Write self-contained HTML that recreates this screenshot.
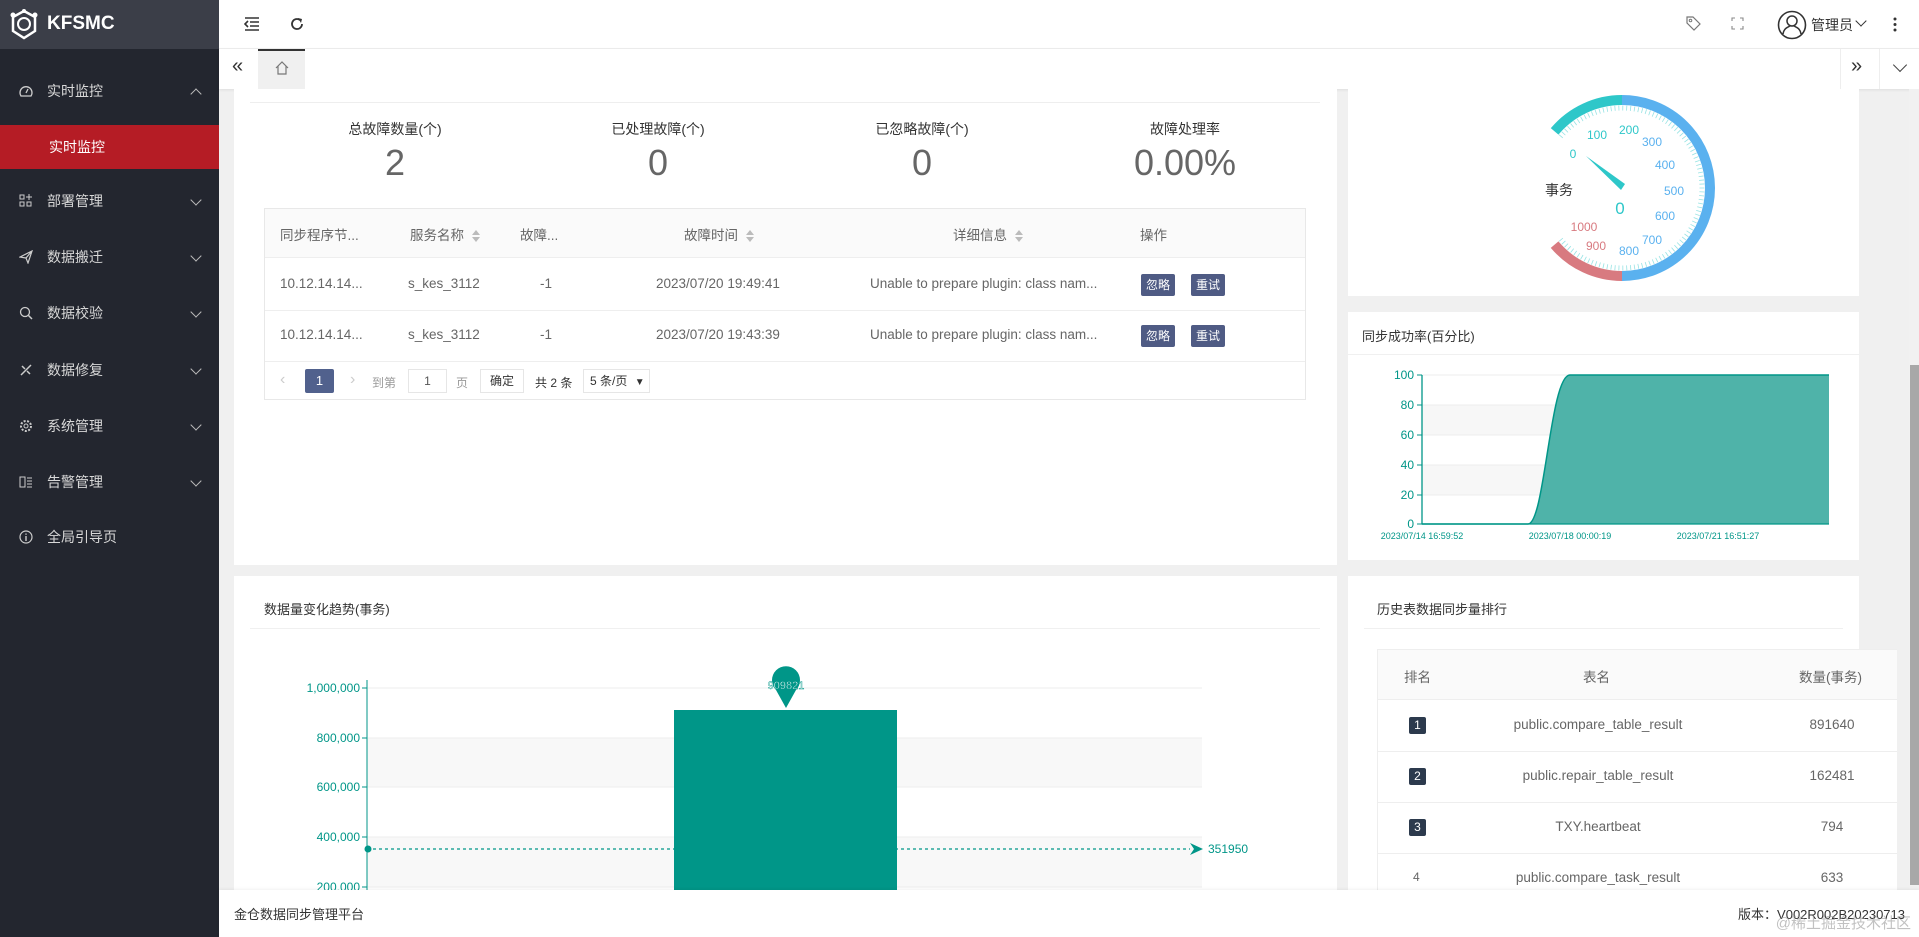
<!DOCTYPE html>
<html><head><meta charset="utf-8"><style>
*{margin:0;padding:0;box-sizing:border-box}
body{width:1919px;height:937px;overflow:hidden;position:relative;background:#f0f0f0;font-family:"Liberation Sans","Noto Sans CJK SC",sans-serif;color:#555;font-size:14px}
.abs{position:absolute}
#side{left:0;top:0;width:219px;height:937px;background:#23262f}
#logo{left:0;top:0;width:219px;height:49px;background:#3b3e48;color:#fff;font-weight:bold;font-size:19px}
.mi{position:absolute;left:0;width:219px;height:40px;color:#d8d8d8;font-size:14px;line-height:40px}
.mi .ic{position:absolute;left:19px;top:13px;width:14px;height:14px}
.mi .t{position:absolute;left:47px}
.mi .ar{position:absolute;left:192px;top:15px;width:8px;height:8px;border-right:1.5px solid #bbb;border-bottom:1.5px solid #bbb;transform:rotate(45deg)}
.mi .ar.up{transform:rotate(-135deg);top:19px}
#top{left:219px;top:0;width:1700px;height:49px;background:#fff;border-bottom:1px solid #eee}
#tabs{left:219px;top:49px;width:1700px;height:40px;background:#fff;box-shadow:0 1px 3px rgba(0,0,0,.08)}
.card{position:absolute;background:#fff}
.lbl{position:absolute;font-size:14px;color:#333;transform:translateX(-50%);white-space:nowrap}
.big{position:absolute;font-size:36px;color:#666;transform:translateX(-50%)}
.th{position:absolute;font-size:13.5px;color:#666;white-space:nowrap}
.td{position:absolute;font-size:13.5px;color:#666;white-space:nowrap}
.btn{position:absolute;height:22px;width:34px;background:#4f5b84;color:#fff;font-size:12px;line-height:22px;text-align:center;border-radius:2px}
.sort{display:inline-block;margin-left:8px;vertical-align:middle}
.sort:before{content:"";display:block;border:4px solid transparent;border-bottom:5px solid #bbb;border-top:0;margin-bottom:2px}
.sort:after{content:"";display:block;border:4px solid transparent;border-top:5px solid #bbb;border-bottom:0}
.rk{position:absolute;width:17px;height:17px;background:#2c3a4d;color:#fff;font-size:12px;line-height:17px;text-align:center;border-radius:2px}
</style></head><body>

<div id="side" class="abs">
 <div id="logo" class="abs">
  <svg class="abs" style="left:9px;top:9px" width="30" height="32" viewBox="0 0 30 32"><path d="M15 2 L26 8 L26 22 L15 29 L4 22 L4 8 Z" fill="none" stroke="#fff" stroke-width="2.5"/><circle cx="15" cy="15" r="6" fill="none" stroke="#fff" stroke-width="2"/><circle cx="4" cy="6" r="2.5" fill="#fff"/><circle cx="26" cy="6" r="2.5" fill="#fff"/><circle cx="15" cy="2" r="2" fill="#fff"/></svg>
  <span class="abs" style="left:47px;top:13px">KFSMC</span>
 </div>
 <div class="mi" style="top:71px"><svg class="ic" viewBox="0 0 14 14"><path d="M2 12 A6 6 0 1 1 12 12 Z" fill="none" stroke="#ccc" stroke-width="1.3"/><path d="M7 9 L9 5" stroke="#ccc" stroke-width="1.3"/></svg><span class="t">实时监控</span><span class="ar up"></span></div>
 <div class="abs" style="left:0;top:125px;width:219px;height:44px;background:#b51c25;color:#fff;font-size:14px;line-height:44px;padding-left:49px">实时监控</div>
 <div class="mi" style="top:181px"><svg class="ic" viewBox="0 0 14 14"><rect x="1" y="1" width="4" height="4" fill="none" stroke="#ccc"/><rect x="1" y="8" width="4" height="4" fill="none" stroke="#ccc"/><rect x="8" y="8" width="4" height="4" fill="none" stroke="#ccc"/><path d="M10 0 L10 6 M7 3 L13 3" stroke="#ccc"/></svg><span class="t">部署管理</span><span class="ar"></span></div>
 <div class="mi" style="top:237px"><svg class="ic" viewBox="0 0 14 14"><path d="M1 7 L13 1 L9 13 L7 8 Z M7 8 L13 1" fill="none" stroke="#ccc" stroke-width="1.2"/></svg><span class="t">数据搬迁</span><span class="ar"></span></div>
 <div class="mi" style="top:293px"><svg class="ic" viewBox="0 0 14 14"><circle cx="6" cy="6" r="4.5" fill="none" stroke="#ccc" stroke-width="1.3"/><path d="M9.5 9.5 L13 13" stroke="#ccc" stroke-width="1.5"/></svg><span class="t">数据校验</span><span class="ar"></span></div>
 <div class="mi" style="top:350px"><svg class="ic" viewBox="0 0 14 14"><path d="M2 12 L12 2 M3 3 L6 6 M8 8 L11 11" stroke="#ccc" stroke-width="1.5"/></svg><span class="t">数据修复</span><span class="ar"></span></div>
 <div class="mi" style="top:406px"><svg class="ic" viewBox="0 0 14 14"><circle cx="7" cy="7" r="5" fill="none" stroke="#ccc" stroke-width="2" stroke-dasharray="2 1.5"/><circle cx="7" cy="7" r="2" fill="none" stroke="#ccc"/></svg><span class="t">系统管理</span><span class="ar"></span></div>
 <div class="mi" style="top:462px"><svg class="ic" viewBox="0 0 14 14"><rect x="1" y="2" width="5" height="10" fill="none" stroke="#ccc"/><path d="M8 3 H13 M8 6 H13 M8 9 H13 M8 12 H13" stroke="#ccc"/></svg><span class="t">告警管理</span><span class="ar"></span></div>
 <div class="mi" style="top:517px"><svg class="ic" viewBox="0 0 14 14"><circle cx="7" cy="7" r="6" fill="none" stroke="#ccc" stroke-width="1.2"/><path d="M7 6 V11 M7 3.5 V4.8" stroke="#ccc" stroke-width="1.4"/></svg><span class="t">全局引导页</span></div>
</div>

<div id="top" class="abs">
 <svg class="abs" style="left:25px;top:17px" width="16" height="14" viewBox="0 0 16 14"><path d="M1 1 H15 M6 5 H15 M6 9 H15 M1 13 H15 M4 4 L1 7 L4 10" fill="none" stroke="#333" stroke-width="1.6"/></svg>
 <svg class="abs" style="left:70px;top:16px" width="16" height="16" viewBox="0 0 16 16"><path d="M13 8 A5 5 0 1 1 11 4" fill="none" stroke="#333" stroke-width="1.8"/><path d="M9 2 L13 3 L12 7" fill="#333"/></svg>
 <svg class="abs" style="left:1466px;top:15px" width="16" height="16" viewBox="0 0 16 16"><path d="M2 2 H8 L15 9 L9 15 L2 8 Z" fill="none" stroke="#777" stroke-width="1.2"/><circle cx="5.5" cy="5.5" r="1.3" fill="none" stroke="#777"/></svg>
 <svg class="abs" style="left:1512px;top:17px" width="13" height="13" viewBox="0 0 13 13"><path d="M1 4 V1 H4 M9 1 H12 V4 M12 9 V12 H9 M4 12 H1 V9" fill="none" stroke="#888" stroke-width="1.1"/></svg>
 <svg class="abs" style="left:1558px;top:10px" width="30" height="30" viewBox="0 0 30 30"><circle cx="15" cy="15" r="13.5" fill="none" stroke="#333" stroke-width="1.6"/><circle cx="15" cy="11" r="5" fill="none" stroke="#333" stroke-width="1.5"/><path d="M6 24 C7 18 11 17 13 16 M24 24 C23 18 19 17 17 16" fill="none" stroke="#333" stroke-width="1.5"/></svg>
 <span class="abs" style="left:1592px;top:15px;font-size:14px;color:#333">管理员</span>
 <span class="abs" style="left:1638px;top:17px;width:8px;height:8px;border-right:1.3px solid #333;border-bottom:1.3px solid #333;transform:rotate(45deg)"></span>
 <svg class="abs" style="left:1674px;top:17px" width="4" height="15"><circle cx="2" cy="2" r="1.5" fill="#333"/><circle cx="2" cy="7.5" r="1.5" fill="#333"/><circle cx="2" cy="13" r="1.5" fill="#333"/></svg>
</div>

<div id="tabs" class="abs">
 <span class="abs" style="left:13px;top:6px;font-size:20px;color:#333">«</span>
 <div class="abs" style="left:39px;top:0;width:47px;height:40px;background:#f0f0f0;border-top:2px solid #333"></div>
 <svg class="abs" style="left:55px;top:11px" width="16" height="16" viewBox="0 0 16 16"><path d="M2 8 L8 2 L14 8 M4 6 V14 H12 V6" fill="none" stroke="#777" stroke-width="1.2"/></svg>
 <div class="abs" style="left:1621px;top:0;width:1px;height:40px;background:#eee"></div>
 <span class="abs" style="left:1632px;top:6px;font-size:20px;color:#333">»</span>
 <div class="abs" style="left:1660px;top:0;width:1px;height:40px;background:#eee"></div>
 <span class="abs" style="left:1676px;top:11px;width:10px;height:10px;border-right:1.3px solid #444;border-bottom:1.3px solid #444;transform:rotate(45deg)"></span>
</div>

<!-- card 1 -->
<div class="card" style="left:234px;top:89px;width:1103px;height:476px">
 <div class="abs" style="left:16px;top:13px;width:1070px;height:1px;background:#eee"></div>
</div>
<span class="lbl" style="left:395px;top:119px">总故障数量(个)</span>
<span class="lbl" style="left:658px;top:119px">已处理故障(个)</span>
<span class="lbl" style="left:922px;top:119px">已忽略故障(个)</span>
<span class="lbl" style="left:1185px;top:119px">故障处理率</span>
<span class="big" style="left:395px;top:142px">2</span>
<span class="big" style="left:658px;top:142px">0</span>
<span class="big" style="left:922px;top:142px">0</span>
<span class="big" style="left:1185px;top:142px">0.00%</span>

<div class="abs" style="left:264px;top:208px;width:1042px;height:192px;border:1px solid #e8e8e8;background:#fff"></div>
<div class="abs" style="left:265px;top:209px;width:1040px;height:49px;background:#fafafa;border-bottom:1px solid #eee"></div>
<div class="abs" style="left:265px;top:310px;width:1040px;height:1px;background:#eee"></div>
<div class="abs" style="left:265px;top:361px;width:1040px;height:1px;background:#eee"></div>
<span class="th" style="left:280px;top:224px">同步程序节...</span>
<span class="th" style="left:410px;top:224px">服务名称<span class="sort"></span></span>
<span class="th" style="left:520px;top:224px">故障...</span>
<span class="th" style="left:684px;top:224px">故障时间<span class="sort"></span></span>
<span class="th" style="left:953px;top:224px">详细信息<span class="sort"></span></span>
<span class="th" style="left:1140px;top:224px">操作</span>

<span class="td" style="left:280px;top:276px">10.12.14.14...</span>
<span class="td" style="left:408px;top:276px">s_kes_3112</span>
<span class="td" style="left:540px;top:276px">-1</span>
<span class="td" style="left:656px;top:276px">2023/07/20 19:49:41</span>
<span class="td" style="left:870px;top:276px">Unable to prepare plugin: class nam...</span>
<div class="btn" style="left:1141px;top:274px">忽略</div><div class="btn" style="left:1191px;top:274px">重试</div>
<span class="td" style="left:280px;top:327px">10.12.14.14...</span>
<span class="td" style="left:408px;top:327px">s_kes_3112</span>
<span class="td" style="left:540px;top:327px">-1</span>
<span class="td" style="left:656px;top:327px">2023/07/20 19:43:39</span>
<span class="td" style="left:870px;top:327px">Unable to prepare plugin: class nam...</span>
<div class="btn" style="left:1141px;top:325px">忽略</div><div class="btn" style="left:1191px;top:325px">重试</div>

<span class="td" style="left:280px;top:371px;color:#ccc;font-size:16px">‹</span>
<div class="abs" style="left:305px;top:369px;width:29px;height:24px;background:#51618d;color:#fff;font-size:13px;text-align:center;line-height:24px;border-radius:2px">1</div>
<span class="td" style="left:350px;top:371px;color:#ccc;font-size:16px">›</span>
<span class="td" style="left:372px;top:374px;color:#999;font-size:12px">到第</span>
<div class="abs" style="left:408px;top:369px;width:39px;height:24px;border:1px solid #e6e6e6;font-size:12px;text-align:center;line-height:22px;color:#555">1</div>
<span class="td" style="left:456px;top:374px;color:#999;font-size:12px">页</span>
<div class="abs" style="left:480px;top:369px;width:44px;height:24px;border:1px solid #e6e6e6;font-size:12px;text-align:center;line-height:22px;color:#333">确定</div>
<span class="td" style="left:535px;top:374px;color:#333;font-size:12px">共 2 条</span>
<div class="abs" style="left:583px;top:369px;width:67px;height:24px;border:1px solid #e6e6e6;font-size:12px;line-height:22px;color:#333;padding-left:6px">5 条/页 <span style="font-size:10px;margin-left:4px">▼</span></div>

<!-- gauge card -->
<div class="card" style="left:1348px;top:89px;width:511px;height:207px"></div>
<svg class="abs" style="left:1348px;top:89px" width="511" height="207" viewBox="1348 89 511 207">
 <g fill="none" stroke-width="10">
  <path d="M1554.6 131.4 A88 88 0 0 1 1622 100" stroke="#2ec7c9"/>
  <path d="M1622 100 A88 88 0 0 1 1622 276" stroke="#5ab1ef"/>
  <path d="M1622 276 A88 88 0 0 1 1554.6 244.6" stroke="#d87a80"/>
 </g>
 <path d="M1560.7 136.6 A80 80 0 1 1 1560.7 239.4" fill="none" stroke="#2ec7c9" stroke-width="5" stroke-dasharray="0.8 3.1" opacity=".5"/>
 <g font-size="12" font-family="Liberation Sans" text-anchor="middle">
  <text x="1573" y="158" fill="#2ec7c9">0</text>
  <text x="1597" y="139" fill="#2ec7c9">100</text>
  <text x="1629" y="134" fill="#2ec7c9">200</text>
  <text x="1652" y="146" fill="#5ab1ef">300</text>
  <text x="1665" y="169" fill="#5ab1ef">400</text>
  <text x="1674" y="195" fill="#5ab1ef">500</text>
  <text x="1665" y="220" fill="#5ab1ef">600</text>
  <text x="1652" y="244" fill="#5ab1ef">700</text>
  <text x="1629" y="255" fill="#5ab1ef">800</text>
  <text x="1596" y="250" fill="#d87a80">900</text>
  <text x="1584" y="231" fill="#d87a80">1000</text>
 </g>
 <text x="1559" y="195" font-size="14" fill="#333" text-anchor="middle" font-family="Noto Sans CJK SC">事务</text>
 <text x="1620" y="214" font-size="17" fill="#2ec7c9" text-anchor="middle" font-family="Liberation Sans">0</text>
 <path d="M1586 156 L1625 184 L1621 190 Z" fill="#2ec7c9"/>
</svg>

<!-- success chart card -->
<div class="card" style="left:1348px;top:312px;width:511px;height:248px">
 <span class="abs" style="left:14px;top:14px;font-size:13px;color:#333">同步成功率(百分比)</span>
 <div class="abs" style="left:0;top:42px;width:511px;height:1px;background:#f0f0f0"></div>
</div>
<svg class="abs" style="left:1348px;top:312px" width="511" height="248" viewBox="1348 312 511 248">
 <rect x="1422" y="405" width="407" height="30" fill="#f7f7f7"/>
 <rect x="1422" y="465" width="407" height="30" fill="#f7f7f7"/>
 <g stroke="#eee"><path d="M1422 375 H1829 M1422 405 H1829 M1422 435 H1829 M1422 465 H1829 M1422 495 H1829"/></g>
 <path d="M1528 524 C1545 524 1550 375 1570 375 L1829 375 L1829 524 Z" fill="#4fb3a9"/>
 <path d="M1422 524 H1528 C1545 524 1550 375 1570 375 H1829" fill="none" stroke="#009688" stroke-width="1.5"/>
 <path d="M1422 375 V524 H1829" fill="none" stroke="#009688" stroke-width="1.3"/>
 <g stroke="#009688"><path d="M1417 375 H1422 M1417 405 H1422 M1417 435 H1422 M1417 465 H1422 M1417 495 H1422 M1417 524 H1422"/></g>
 <g font-size="12" fill="#009688" text-anchor="end" font-family="Liberation Sans">
  <text x="1414" y="379">100</text><text x="1414" y="409">80</text><text x="1414" y="439">60</text><text x="1414" y="469">40</text><text x="1414" y="499">20</text><text x="1414" y="528">0</text>
 </g>
 <g font-size="9" fill="#009688" text-anchor="middle" font-family="Liberation Sans">
  <text x="1422" y="539">2023/07/14 16:59:52</text><text x="1570" y="539">2023/07/18 00:00:19</text><text x="1718" y="539">2023/07/21 16:51:27</text>
 </g>
</svg>

<!-- bottom-left card -->
<div class="card" style="left:234px;top:576px;width:1103px;height:361px">
 <span class="abs" style="left:30px;top:23px;font-size:13px;color:#333">数据量变化趋势(事务)</span>
 <div class="abs" style="left:16px;top:52px;width:1070px;height:1px;background:#f0f0f0"></div>
</div>
<svg class="abs" style="left:234px;top:576px" width="1103" height="361" viewBox="234 576 1103 361">
 <rect x="367" y="738" width="835" height="49" fill="#f8f8f8"/>
 <rect x="367" y="837" width="835" height="50" fill="#f8f8f8"/>
 <g stroke="#eee"><path d="M367 688 H1202 M367 738 H1202 M367 787 H1202 M367 837 H1202 M367 887 H1202"/></g>
 <path d="M367 680 V937" stroke="#009688" stroke-width="1"/>
 <g stroke="#009688"><path d="M362 688 H367 M362 738 H367 M362 787 H367 M362 837 H367 M362 887 H367"/></g>
 <g font-size="12" fill="#009688" text-anchor="end" font-family="Liberation Sans">
  <text x="360" y="692">1,000,000</text><text x="360" y="742">800,000</text><text x="360" y="791">600,000</text><text x="360" y="841">400,000</text><text x="360" y="891">200,000</text>
 </g>
 <rect x="674" y="710" width="223" height="227" fill="#009688"/>
 <path d="M786 708 L776 690 A14 14 0 1 1 796 690 Z" fill="#009688"/>
 <text x="786" y="689" font-size="11" fill="#fff" stroke="#009688" stroke-width="0.4" text-anchor="middle" font-family="Liberation Sans">909821</text>
 <path d="M367 849 H1190" stroke="#009688" stroke-dasharray="3 3" stroke-width="1.3"/>
 <circle cx="368" cy="849" r="3.5" fill="#009688"/>
 <path d="M1190 843 L1203 849 L1190 855 L1194 849 Z" fill="#009688"/>
 <text x="1208" y="853" font-size="12" fill="#009688" font-family="Liberation Sans">351950</text>
</svg>

<!-- bottom-right card -->
<div class="card" style="left:1348px;top:576px;width:511px;height:361px">
 <span class="abs" style="left:29px;top:23px;font-size:13px;color:#333">历史表数据同步量排行</span>
 <div class="abs" style="left:16px;top:52px;width:479px;height:1px;background:#f0f0f0"></div>
</div>
<div class="abs" style="left:1377px;top:649px;width:520px;height:288px;border-left:1px solid #eee;background:#fff"></div>
<div class="abs" style="left:1378px;top:649px;width:519px;height:51px;background:#fafafa;border-bottom:1px solid #eee;border-top:1px solid #eee"></div>
<div class="abs" style="left:1378px;top:751px;width:519px;height:1px;background:#eee"></div>
<div class="abs" style="left:1378px;top:802px;width:519px;height:1px;background:#eee"></div>
<div class="abs" style="left:1378px;top:853px;width:519px;height:1px;background:#eee"></div>
<span class="td" style="left:1404px;top:666px">排名</span>
<span class="td" style="left:1583px;top:666px">表名</span>
<span class="td" style="left:1799px;top:666px">数量(事务)</span>
<div class="rk" style="left:1409px;top:717px">1</div>
<div class="rk" style="left:1409px;top:768px">2</div>
<div class="rk" style="left:1409px;top:819px">3</div>
<span class="td" style="left:1413px;top:870px;font-size:12px">4</span>
<span class="td" style="left:1598px;top:717px;transform:translateX(-50%)">public.compare_table_result</span>
<span class="td" style="left:1598px;top:768px;transform:translateX(-50%)">public.repair_table_result</span>
<span class="td" style="left:1598px;top:819px;transform:translateX(-50%)">TXY.heartbeat</span>
<span class="td" style="left:1598px;top:870px;transform:translateX(-50%)">public.compare_task_result</span>
<span class="td" style="left:1832px;top:717px;transform:translateX(-50%)">891640</span>
<span class="td" style="left:1832px;top:768px;transform:translateX(-50%)">162481</span>
<span class="td" style="left:1832px;top:819px;transform:translateX(-50%)">794</span>
<span class="td" style="left:1832px;top:870px;transform:translateX(-50%)">633</span>

<!-- scrollbar -->
<div class="abs" style="left:1909px;top:89px;width:10px;height:801px;background:#f1f1f1"></div>
<div class="abs" style="left:1910px;top:365px;width:9px;height:520px;background:#a8a8a8"></div>

<!-- footer -->
<div class="abs" style="left:219px;top:890px;width:1700px;height:47px;background:#fff;box-shadow:0 -1px 3px rgba(0,0,0,.06)">
 <span class="abs" style="left:15px;top:14px;font-size:13px;color:#333">金仓数据同步管理平台</span>
 <span class="abs" style="right:14px;top:14px;font-size:13px;color:#333">版本：V002R002B20230713</span>
 <span class="abs" style="right:8px;top:22px;font-size:15px;color:#999;opacity:.6">@稀土掘金技术社区</span>
</div>
</body></html>
